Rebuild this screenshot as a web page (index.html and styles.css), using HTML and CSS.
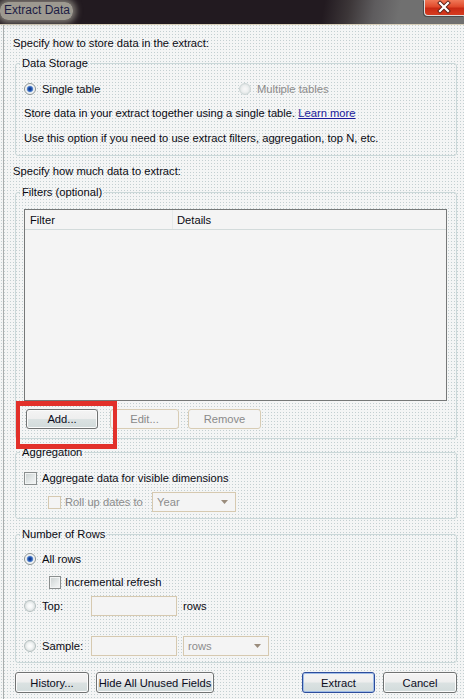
FILE: index.html
```html
<!DOCTYPE html>
<html>
<head>
<meta charset="utf-8">
<title>Extract Data</title>
<link rel="stylesheet" href="styles.css">
</head>
<body>
<div class="window">
  <div class="titlebar">
    <span class="title">Extract Data</span>
    <span class="close">
      <svg width="38" height="14" viewBox="0 0 38 14"><path d="M15 3 L23 11 M23 3 L15 11" stroke="#5a2018" stroke-width="4" stroke-linecap="square"/><path d="M15 3 L23 11 M23 3 L15 11" stroke="#ffffff" stroke-width="2.2" stroke-linecap="square"/></svg>
    </span>
  </div>
  <div class="content">
    <p class="heading first">Specify how to store data in the extract:</p>
    <fieldset class="group storage">
      <legend>Data Storage</legend>
      <div class="row">
        <span class="opt wide"><span class="radio on"></span><span class="lbl">Single table</span></span>
        <span class="opt disabled"><span class="radio off"></span><span class="lbl">Multiple tables</span></span>
      </div>
      <div class="line l2">Store data in your extract together using a single table. <a class="link">Learn more</a></div>
      <div class="line l3">Use this option if you need to use extract filters, aggregation, top N, etc.</div>
    </fieldset>

    <p class="heading second">Specify how much data to extract:</p>
    <fieldset class="group filters">
      <legend>Filters (optional)</legend>
      <div class="table">
        <div class="thead"><span class="col1">Filter</span><span class="col2">Details</span></div>
      </div>
      <div class="btnrow">
        <span class="highlight"><button class="btn add">Add...</button></span>
        <button class="btn dis edit">Edit...</button>
        <button class="btn dis remove">Remove</button>
      </div>
    </fieldset>

    <fieldset class="group aggregation">
      <legend>Aggregation</legend>
      <div class="row r18">
        <span class="check"></span><span class="lbl cl">Aggregate data for visible dimensions</span>
      </div>
      <div class="row r20 rollup">
        <span class="check dis indent"></span><span class="lbl cl2 disabled-text rolllbl">Roll up dates to</span>
        <span class="combo w84"><span class="ctext">Year</span><svg class="arrow" width="7" height="4" viewBox="0 0 7 4"><path d="M0 0 H7 L3.5 4 Z" fill="#9a8c7c"/></svg></span>
      </div>
    </fieldset>

    <fieldset class="group rows">
      <legend>Number of Rows</legend>
      <div class="row r18">
        <span class="radio on"></span><span class="lbl">All rows</span>
      </div>
      <div class="row r18 mt5">
        <span class="check indent2"></span><span class="lbl cl2">Incremental refresh</span>
      </div>
      <div class="row r20 mt5">
        <span class="opt w67"><span class="radio off"></span><span class="lbl">Top:</span></span>
        <span class="input"></span>
        <span class="lbl rowsl">rows</span>
      </div>
      <div class="row r20 mt20">
        <span class="opt w67"><span class="radio off"></span><span class="lbl">Sample:</span></span>
        <span class="input"></span>
        <span class="combo w86 ml6"><span class="ctext">rows</span><svg class="arrow" width="7" height="4" viewBox="0 0 7 4"><path d="M0 0 H7 L3.5 4 Z" fill="#9a8c7c"/></svg></span>
      </div>
    </fieldset>

    <div class="footer">
      <button class="btn history">History...</button>
      <button class="btn hide">Hide All Unused Fields</button>
      <button class="btn extract">Extract</button>
      <button class="btn cancel">Cancel</button>
    </div>
  </div>
</div>
</body>
</html>
```
FILE: styles.css
```css
* { box-sizing: border-box; }
html, body { margin: 0; padding: 0; }
body {
  width: 464px;
  height: 699px;
  overflow: hidden;
  font-family: "Liberation Sans", Arial, sans-serif;
  font-size: 11.2px;
  color: #0a0a12;
  background: radial-gradient(circle, #c3cfd1 0.7px, rgba(195,207,209,0) 1px) 0 0 / 3px 3px, #f4f5f5;
}
.window {
  width: 464px;
  height: 699px;
  display: flex;
  flex-direction: column;
}
.titlebar {
  height: 25px;
  flex: none;
  display: flex;
  align-items: flex-start;
  background: linear-gradient(100deg, #221a20 0, #221a20 320px, #3c3638 345px, #5e5c5e 370px, #707070 395px, #707070 100%);
  border-bottom: 1px solid #d8cfb9;
}
.title {
  margin: 2px 0 0 0;
  padding: 2px 3px 3px 4px;
  font-size: 12px;
  line-height: 13px;
  color: #1c1c44;
  background: rgba(168, 164, 154, 0.92);
  border-radius: 8px;
  box-shadow: 0 0 6px 3px rgba(160, 156, 146, 0.75);
}
.close {
  margin-left: auto;
  width: 40px;
  height: 16px;
  border: 1px solid #dcdcdc;
  border-right: none;
  border-top: none;
  border-radius: 0 0 0 4px;
  background: linear-gradient(#f07858 0, #e04a2c 45%, #c82a14 55%, #d63c20 100%);
  box-shadow: -1px 1px 0 #4a4a4a;
  display: flex;
}
.close svg { display: block; }

.content {
  flex: 1;
  margin-left: 3px;
  border-left: 1px solid #a9adad;
  padding: 0 7px 0 9px;
}
.heading {
  margin: 0;
  height: 15px;
  line-height: 15px;
}
.heading.first { margin-top: 11px; }
.heading.second { margin-top: 8px; }

.group {
  margin: 0 0 0 2px;
  padding: 0 8px;
  border: 1px solid #cbd8d9;
  border-radius: 3px;
  min-width: 0;
}
.group legend {
  margin-left: -4px;
  padding: 0 2px;
  height: 15px;
  line-height: 15px;
}
.storage { margin-top: 5px; padding-top: 8px; padding-bottom: 9px; }
.filters { margin-top: 6px; padding: 9px 9px 9px 8px; }
.aggregation { margin-top: 6px; padding-top: 9px; padding-bottom: 6px; }
.rows { margin-top: 8px; padding-top: 8px; padding-bottom: 6px; }

.row { display: flex; align-items: center; height: 20px; }
.row.r18 { height: 18px; }
.row.r20 { height: 20px; }
.mt5 { margin-top: 5px; }
.mt20 { margin-top: 20px; }
.rollup { margin-top: 5px; }

.opt { display: flex; align-items: center; }
.opt.wide { width: 215px; }
.opt.w67 { width: 67px; }
.lbl { margin-left: 6px; white-space: nowrap; }
.lbl.cl { margin-left: 5px; }
.lbl.cl2 { margin-left: 4px; }
.rolllbl { width: 87px; }
.rowsl { margin-left: 6px; }
.disabled .lbl, .disabled-text { color: #8c8c8c; }

.line { height: 16px; line-height: 16px; white-space: nowrap; }
.line.l2 { margin-top: 6px; }
.line.l3 { margin-top: 9px; }
.link { color: #1a1a9c; text-decoration: underline; }

.radio {
  flex: none;
  width: 12px;
  height: 12px;
  border-radius: 50%;
  border: 1px solid #8c9494;
}
.radio.on {
  background: radial-gradient(circle, #0e2e78 0, #2356b0 1.8px, #5f8ad0 2.8px, #e6ecef 3.6px, #fafafa 5px);
}
.radio.off {
  border-color: #b6c0c0;
  background: radial-gradient(circle, #ffffff 0, #f4f6f6 2.5px, #dde2e2 5px);
}
.opt.disabled .radio.off { border-color: #cdd6d6; background: radial-gradient(circle, #f8f8f8 0, #eef0f0 3px, #dfe4e4 5px); }

.check {
  flex: none;
  width: 13px;
  height: 13px;
  border: 1px solid #8a8e8e;
  background: linear-gradient(135deg, #c9cfcf 0, #e6eaea 60%, #f6f6f6 100%);
  box-shadow: inset 0 0 0 1px #f2f4f4;
}
.check.dis {
  border-color: #d6c9b0;
  background: #f4f4f4;
  box-shadow: none;
}
.check.indent { margin-left: 24px; }
.check.indent2 { margin-left: 25px; width: 12px; }

.combo {
  display: flex;
  align-items: center;
  height: 20px;
  border: 1px solid #d6c9b0;
  background: #f4f4f4;
  color: #8c8c8c;
  padding: 0 0 0 4px;
}
.combo.w84 { width: 84px; }
.combo.w86 { width: 86px; }
.ml6 { margin-left: 6px; }
.ctext { flex: 1; }
.arrow { margin-right: 7px; display: block; }

.input {
  width: 86px;
  height: 20px;
  border: 1px solid #d6c9b0;
  background: #f4f4f4;
}

.table {
  height: 192px;
  border: 1px solid #767878;
  background: #f4f4f4;
}
.thead {
  display: flex;
  height: 20px;
  line-height: 20px;
  border-bottom: 1px solid #d3dbdb;
}
.col1 { width: 147px; padding-left: 5px; }
.col2 { border-left: 1px solid #e6eaea; padding-left: 4px; }

.btnrow { display: flex; margin-top: 8px; height: 20px; }
.btn {
  height: 20px;
  padding: 0;
  font: inherit;
  color: #0c0c1c;
  border: 1px solid #707272;
  border-radius: 3px;
  background: linear-gradient(#f4f4f4 0, #eeeeee 48%, #dbe2e2 52%, #d2dbdb 100%);
  box-shadow: inset 0 0 0 1px #fbfbfb;
}
.btn.dis {
  color: #8a8a8a;
  border-color: #d8ccb4;
  background: #f4f4f4;
  box-shadow: none;
}
.highlight { position: relative; display: flex; margin-left: 2px; }
.highlight::after {
  content: "";
  position: absolute;
  left: -10px;
  top: -8px;
  width: 93px;
  height: 38px;
  border: solid #e2302a;
  border-width: 5px 4px;
}
.add { width: 72px; }
.edit { width: 69px; margin-left: 12px; }
.remove { width: 73px; margin-left: 9px; }

.footer { display: flex; margin-top: 9px; }
.footer .btn { height: 21px; }
.history { width: 74px; margin-left: 2px; }
.hide { width: 118px; margin-left: 7px; }
.extract {
  width: 73px;
  margin-left: auto;
  border-color: #2c4c9c;
  box-shadow: inset 0 0 0 1px #9fbce6;
}
.cancel { width: 74px; margin-left: 8px; }
```
